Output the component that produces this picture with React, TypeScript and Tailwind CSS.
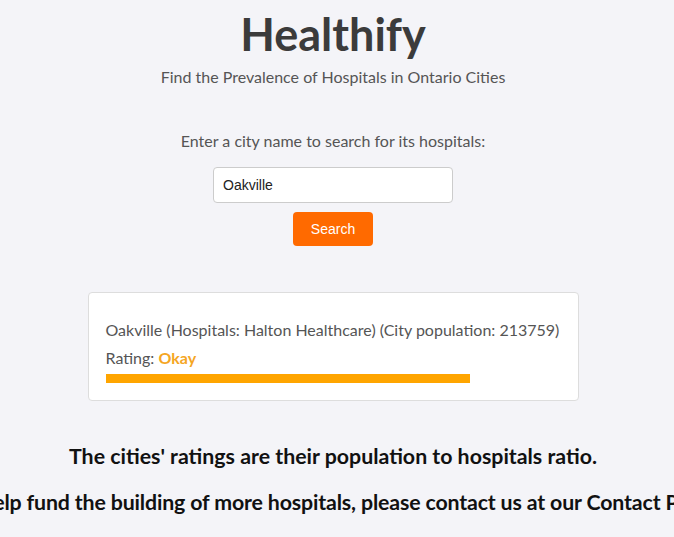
import { useState } from "react";

export default function App() {
  const [city, setCity] = useState("Oakville");

  return (
    <div className="min-h-screen w-full overflow-hidden bg-[#f4f4f8] font-['Lato',sans-serif] text-[#555]">
      <div className="flex w-[666px] flex-col items-center pt-[6px]">
        <h1 className="text-[45px] font-bold leading-[56px] text-[#3b3b3b]">Healthify</h1>
        <p className="mt-[3px] text-[16px] leading-[24px]">Find the Prevalence of Hospitals in Ontario Cities</p>

        <p className="mt-[40px] text-[16px] leading-[24px]">Enter a city name to search for its hospitals:</p>
        <input
          value={city}
          onChange={(e) => setCity(e.target.value)}
          className="mt-[14px] h-[36px] w-[240px] rounded-[4px] border border-[#ccc] bg-white px-[9px] font-['Liberation_Sans',Arial,sans-serif] text-[14px] text-[#222] focus:outline-none"
        />
        <button className="mt-[9px] h-[34px] w-[80px] rounded-[4px] bg-[#ff6a00] font-['Liberation_Sans',Arial,sans-serif] text-[14px] text-white">
          Search
        </button>

        <div className="mt-[46px] w-[491px] rounded-[4px] border border-[#ddd] bg-white px-[17px] pb-[17px] pt-[25px]">
          <p className="text-[16px] leading-[24px]">Oakville (Hospitals: Halton Healthcare) (City population: 213759)</p>
          <p className="mt-[4px] text-[16px] leading-[24px]">
            Rating: <span className="font-bold text-[#f5a623]">Okay</span>
          </p>
          <div className="mt-[4px] h-[9px] w-[364px] bg-[#ffa500]" />
        </div>

        <p className="mt-[41px] whitespace-nowrap text-[21.33px] font-bold leading-[28px] text-[#111]">
          The cities' ratings are their population to hospitals ratio.
        </p>
        <p className="ml-[4px] mt-[18px] whitespace-nowrap text-[21.33px] font-bold leading-[28px] tracking-[-0.15px] text-[#111]">
          To help fund the building of more hospitals, please contact us at our Contact Page.
        </p>
      </div>
    </div>
  );
}
